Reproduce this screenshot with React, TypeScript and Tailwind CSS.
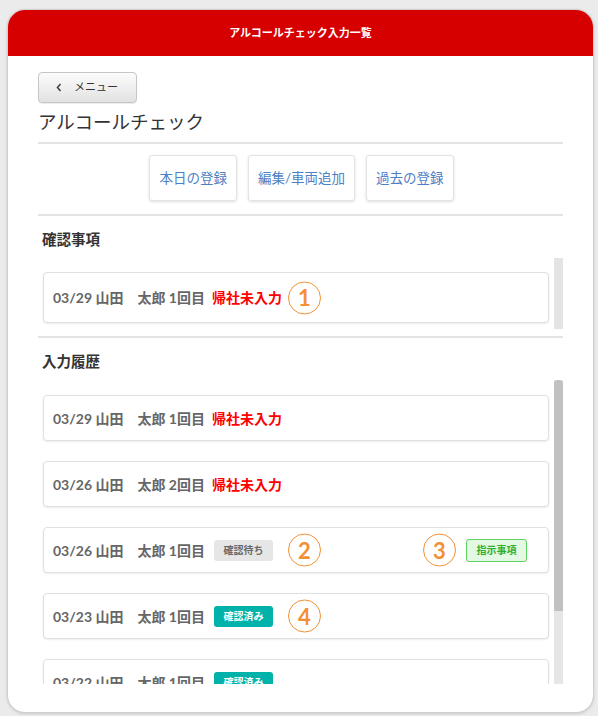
import { ReactNode } from "react";

type Status = "return" | "wait" | "done";

type Row = {
    date: string;
    count: number;
    status: Status;
    mark?: string;
    mark2?: string;
    note?: boolean;
};

const history: Row[] = [
    { date: "03/29", count: 1, status: "return" },
    { date: "03/26", count: 2, status: "return" },
    { date: "03/26", count: 1, status: "wait", mark: "2", mark2: "3", note: true },
    { date: "03/23", count: 1, status: "done", mark: "4" },
    { date: "03/22", count: 1, status: "done" },
];

function Mark({ children, left }: { children: ReactNode; left: string }) {
    return (
        <div
            className={`absolute top-1/2 -translate-y-1/2 ${left} w-[33px] h-[33px] rounded-full border border-[#f39035] text-[#f39035] font-bold text-[22px] leading-none flex items-center justify-center`}
        >
            {children}
        </div>
    );
}

function StatusTag({ status }: { status: Status }) {
    if (status === "return") {
        return <span className="ml-[7px] text-[#ff0000]">帰社未入力</span>;
    }
    if (status === "wait") {
        return (
            <span className="ml-[9px] h-[21px] w-[59px] rounded-[3px] bg-[#e6e6e6] text-[#666] text-[10px] font-bold flex items-center justify-center">
                確認待ち
            </span>
        );
    }
    return (
        <span className="ml-[9px] h-[21px] w-[59px] rounded-[3px] bg-[#00b2a9] text-white text-[10px] font-bold flex items-center justify-center">
            確認済み
        </span>
    );
}

function Item({ row, height }: { row: Row; height: string }) {
    return (
        <div
            className={`relative ${height} shrink-0 bg-white border border-[#e0e0e0] rounded-[4px] shadow-[0_1px_2px_rgba(0,0,0,0.08)] flex items-center pl-[9px] pr-[21px] text-[14px] font-bold text-[#666] whitespace-pre`}
        >
            <span>{row.date} 山田　太郎 {row.count}回目</span>
            <StatusTag status={row.status} />
            {row.mark && <Mark left="left-[244px]">{row.mark}</Mark>}
            {row.mark2 && <Mark left="left-[379px]">{row.mark2}</Mark>}
            {row.note && (
                <span className="ml-auto h-[23px] w-[61px] rounded-[3px] border border-[#5fd35f] bg-[#e4f9e4] text-[#2fae2f] text-[10px] font-bold flex items-center justify-center">
                    指示事項
                </span>
            )}
        </div>
    );
}

function Divider() {
    return <div className="h-[2px] bg-[#e4e4e4]" />;
}

export default function App() {
    return (
        <div className="w-[598px] h-[716px] bg-[#ebebeb] pt-[9px] pl-[7px] font-['Lato','Noto_Sans_CJK_JP',sans-serif]">
            <div className="w-[587px] h-[704px] bg-white rounded-[18px] border border-[#cfcfcf] shadow-[0_1px_3px_rgba(0,0,0,0.15)] overflow-hidden flex flex-col">
                <div className="h-[46px] shrink-0 bg-[#d60000] text-white text-[11px] font-bold flex items-center justify-center">
                    アルコールチェック入力一覧
                </div>

                <div className="flex-1 flex flex-col px-[30px] pt-[16px] min-h-0">
                    <button className="w-[99px] h-[31px] rounded-[4px] border border-[#c6c6c6] bg-gradient-to-b from-[#fcfcfc] to-[#e2e2e2] shadow-[0_1px_1px_rgba(0,0,0,0.08)] flex items-center pl-[17px] text-[#333] text-[11px]">
                        <svg width="6" height="9" viewBox="0 0 6 9" className="mr-[12px]">
                            <polyline points="4.5,1 1.5,4.5 4.5,8" fill="none" stroke="#444" strokeWidth="1.6" />
                        </svg>
                        メニュー
                    </button>

                    <h1 className="mt-[5px] h-[30px] flex items-center text-[18.5px] text-[#333] font-normal">
                        アルコールチェック
                    </h1>

                    <div className="mt-[4px]">
                        <Divider />
                    </div>

                    <div className="mt-[11px] flex justify-center gap-[11px] pl-[2px]">
                        {["本日の登録", "編集/車両追加", "過去の登録"].map((label) => (
                            <button
                                key={label}
                                className="h-[46px] px-[9px] rounded-[3px] border border-[#e3e3e3] bg-white shadow-[0_1px_3px_rgba(0,0,0,0.12)] text-[13.5px] text-[#4d7fc4]"
                            >
                                {label}
                            </button>
                        ))}
                    </div>

                    <div className="mt-[13px]">
                        <Divider />
                    </div>

                    <h2 className="mt-[13px] pl-[4px] text-[14.5px] font-bold text-[#333] leading-[22px]">確認事項</h2>

                    <div className="mt-[7px] h-[71px] flex shrink-0">
                        <div className="flex-1 pl-[5px] pr-[5px] pt-[14px]">
                            <Item row={{ date: "03/29", count: 1, status: "return", mark: "1" }} height="h-[51px]" />
                        </div>
                        <div className="w-[9px] bg-[#e4e4e4]" />
                    </div>

                    <div className="mt-[7px]">
                        <Divider />
                    </div>

                    <h2 className="mt-[13px] pl-[4px] text-[14.5px] font-bold text-[#333] leading-[22px]">入力履歴</h2>

                    <div className="mt-[7px] h-[304px] flex shrink-0">
                        <div className="flex-1 pl-[5px] pr-[5px] pt-[15px] overflow-hidden flex flex-col gap-[20px]">
                            {history.map((row, i) => (
                                <Item key={i} row={row} height="h-[46px]" />
                            ))}
                        </div>
                        <div className="w-[9px] bg-[#e6e6e6]">
                            <div className="h-[231px] bg-[#c1c1c1] rounded-t-[4px]" />
                        </div>
                    </div>
                </div>
            </div>
        </div>
    );
}
